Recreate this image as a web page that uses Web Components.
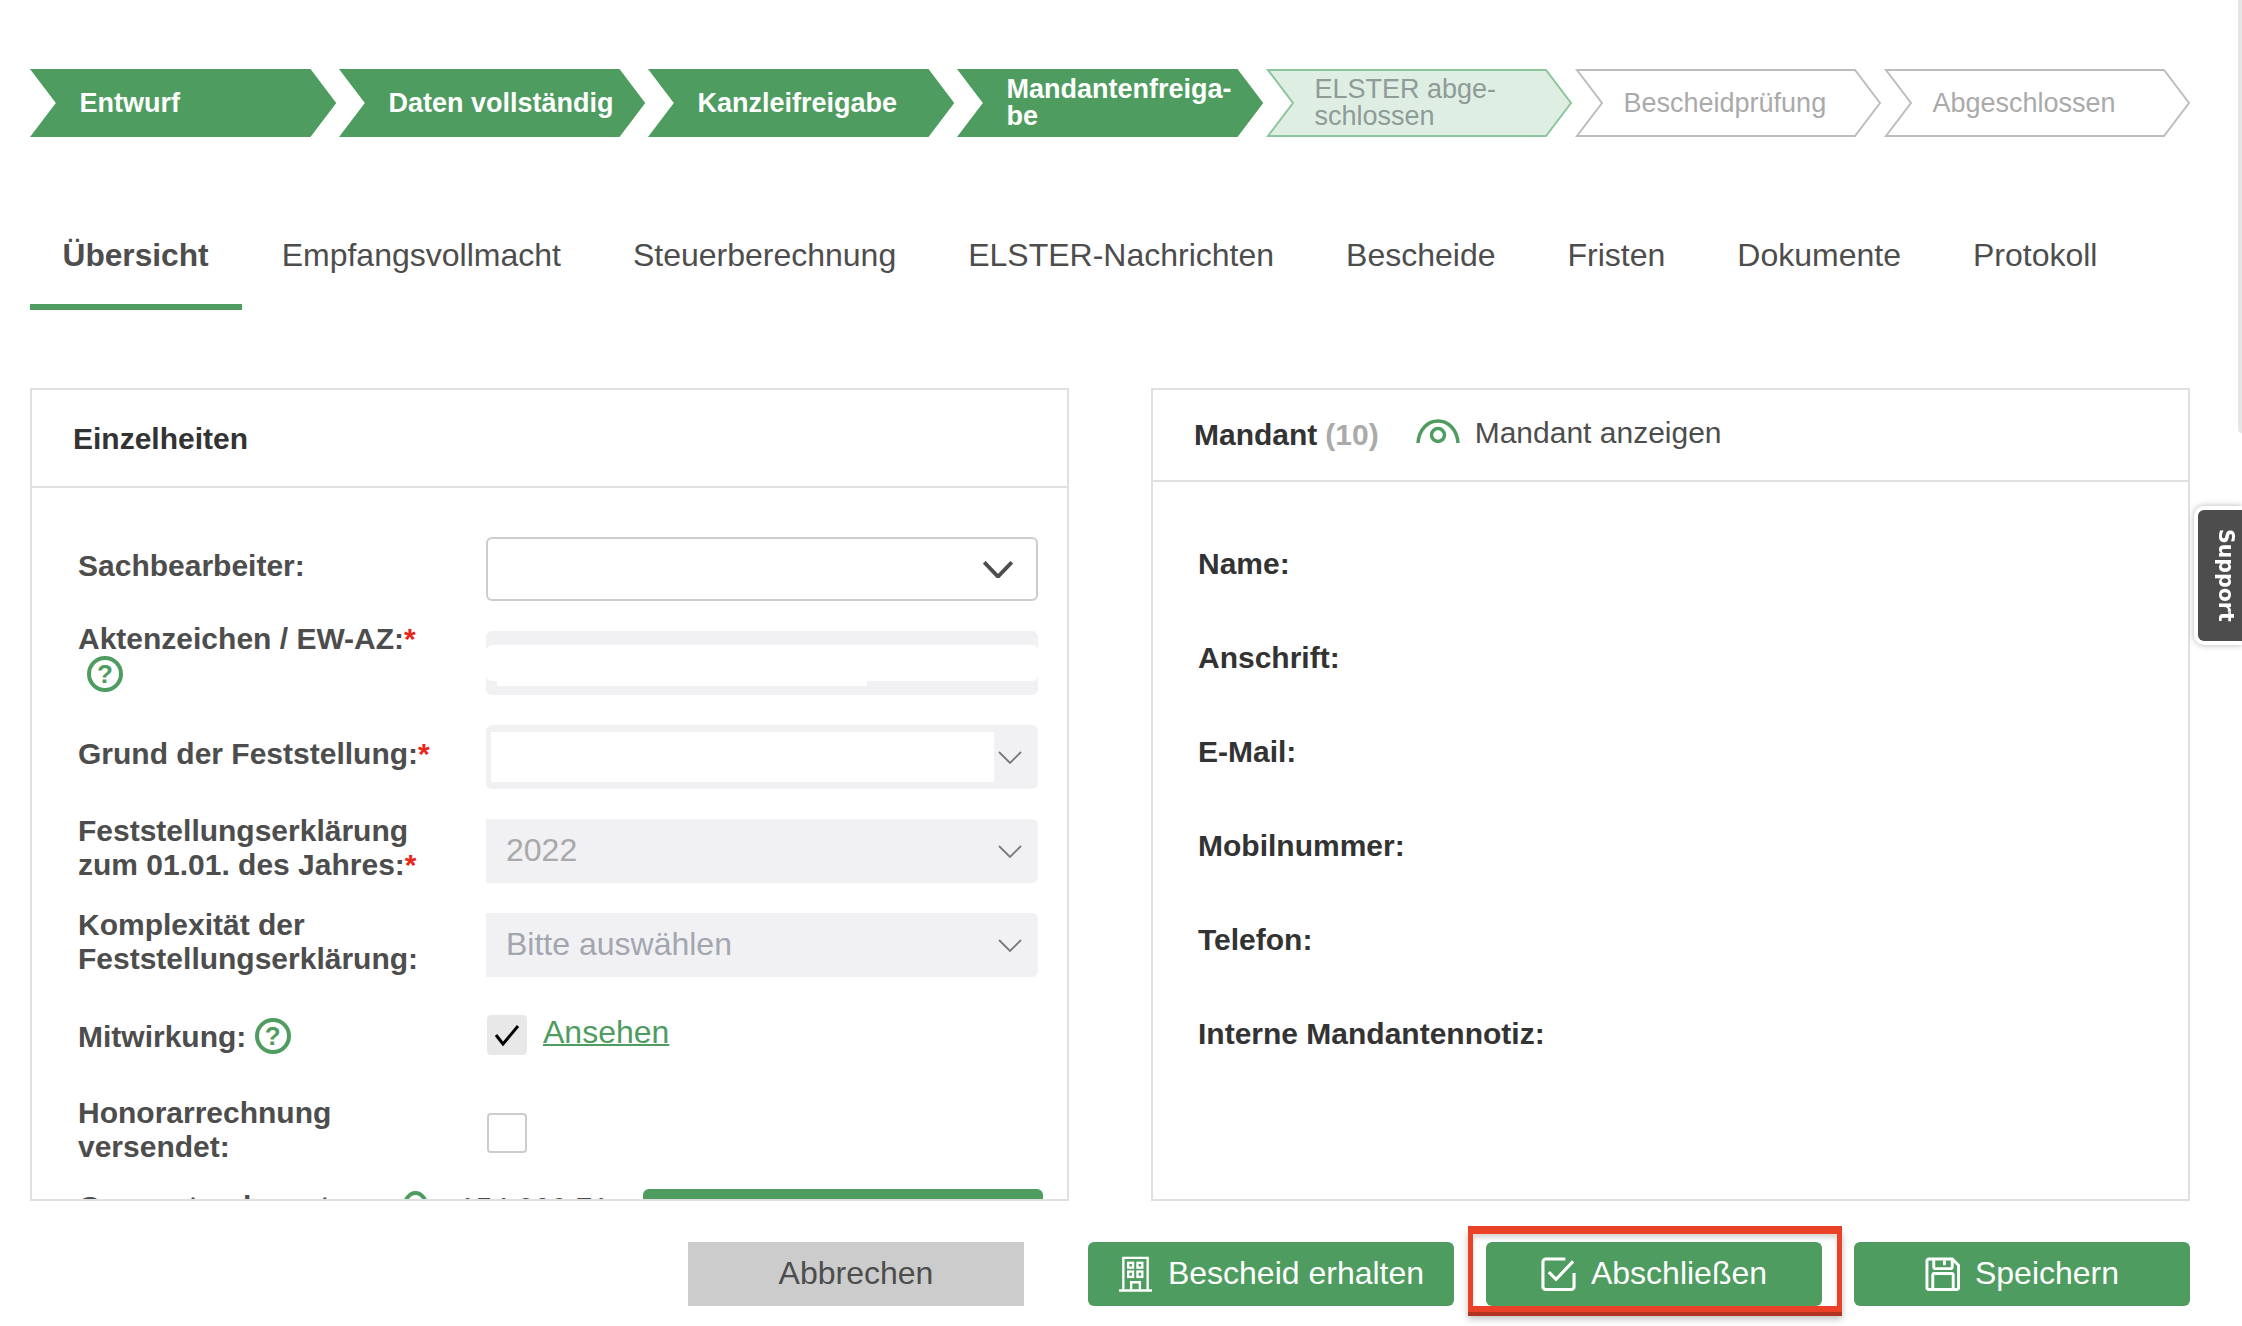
<!DOCTYPE html>
<html lang="de">
<head>
<meta charset="utf-8">
<title>Übersicht</title>
<style>
  html, body { margin: 0; height: 100%; overflow: hidden; background: #fff; }
  body { font-family: "Liberation Sans", Arial, sans-serif; color: #4d4d4d; }
</style>
</head>
<body>
<fc-page>
  <fc-stepper>
    <fc-step state="done">Entwurf</fc-step>
    <fc-step state="done">Daten vollständig</fc-step>
    <fc-step state="done">Kanzleifreigabe</fc-step>
    <fc-step state="done">Mandantenfreiga-<br>be</fc-step>
    <fc-step state="current">ELSTER abge-<br>schlossen</fc-step>
    <fc-step>Bescheidprüfung</fc-step>
    <fc-step>Abgeschlossen</fc-step>
  </fc-stepper>

  <fc-tabs>
    <fc-tab active>Übersicht</fc-tab>
    <fc-tab>Empfangsvollmacht</fc-tab>
    <fc-tab>Steuerberechnung</fc-tab>
    <fc-tab>ELSTER-Nachrichten</fc-tab>
    <fc-tab>Bescheide</fc-tab>
    <fc-tab>Fristen</fc-tab>
    <fc-tab>Dokumente</fc-tab>
    <fc-tab>Protokoll</fc-tab>
  </fc-tabs>

  <fc-columns>
    <fc-panel style="--head: 98px; --head-pad: 41px; --head-top: 2px; --body-pad: 49px 0 0 46px">
      <span slot="head">Einzelheiten</span>
      <fc-field>Sachbearbeiter:<fc-select slot="control" kind="plain"></fc-select></fc-field>
      <fc-field lift="12">Aktenzeichen / EW-AZ:<fc-star></fc-star><br><fc-help style="margin-left: 9px"></fc-help><fc-input slot="control"></fc-input></fc-field>
      <fc-field>Grund der Feststellung:<fc-star></fc-star><fc-select slot="control" kind="blank"></fc-select></fc-field>
      <fc-field>Feststellungserklärung<br>zum 01.01. des Jahres:<fc-star></fc-star><fc-select slot="control" kind="off">2022</fc-select></fc-field>
      <fc-field>Komplexität der<br>Feststellungserklärung:<fc-select slot="control" kind="off" hint>Bitte auswählen</fc-select></fc-field>
      <fc-field short>Mitwirkung: <fc-help style="margin-top: -7px"></fc-help><fc-check slot="control" checked><fc-link>Ansehen</fc-link></fc-check></fc-field>
      <fc-field tall>Honorarrechnung<br>versendet:<fc-check slot="control"></fc-check></fc-field>
      <fc-amount value="154.000,71">Gegenstandswert:</fc-amount>
    </fc-panel>

    <fc-panel style="--head: 92px; --head-pad: 41px; --body-pad: 65px 0 0 45px">
      <span slot="head"><fc-client-head count="(10)" action="Mandant anzeigen">Mandant</fc-client-head></span>
      <fc-info>Name:</fc-info>
      <fc-info>Anschrift:</fc-info>
      <fc-info>E-Mail:</fc-info>
      <fc-info>Mobilnummer:</fc-info>
      <fc-info>Telefon:</fc-info>
      <fc-info>Interne Mandantennotiz:</fc-info>
    </fc-panel>
  </fc-columns>

  <fc-footer>
    <fc-button kind="cancel">Abbrechen</fc-button>
    <fc-button icon="building" style="width: 366px">Bescheid erhalten</fc-button>
    <fc-button icon="check" marked>Abschließen</fc-button>
    <fc-button icon="save">Speichern</fc-button>
  </fc-footer>
</fc-page>
<fc-support>Support</fc-support>

<script>
class Page extends HTMLElement {
  constructor() {
    super();
    this.attachShadow({ mode: 'open' });
    this.shadowRoot.innerHTML = `
    <style>
      :host {
        display: flex;
        flex-direction: column;
        box-sizing: border-box;
        height: 1326px;
        padding: 69px 52px 0 30px;
      }
      #scrollbar {
        position: fixed;
        top: 0;
        right: 0;
        width: 4px;
        height: 433px;
        background: #e6e6e6;
        border-bottom-left-radius: 4px;
      }
    </style>
    <slot></slot>
    <div id="scrollbar"></div>`;
  }
}

class Stepper extends HTMLElement {
  constructor() {
    super();
    this.attachShadow({ mode: 'open' });
    this.shadowRoot.innerHTML = `
    <style>
      :host { display: flex; gap: 4px; padding-left: 0.5px; }
    </style>
    <slot></slot>`;
  }
}

class Step extends HTMLElement {
  constructor() {
    super();
    this.attachShadow({ mode: 'open' });
    this.shadowRoot.innerHTML = `
    <style>
      :host {
        display: flex;
        align-items: center;
        position: relative;
        box-sizing: border-box;
        width: 305px;
        height: 68px;
        padding-left: 48px;
        font-size: 27px;
        line-height: 27px;
        color: #aaaaaa;
      }
      :host([state="done"]) { color: #fff; font-weight: bold; padding-left: 49px; }
      :host([state="current"]) { color: #8f9b98; }
      svg { position: absolute; inset: 0; width: 100%; height: 100%; overflow: visible; }
      polygon { fill: #fff; stroke: #bdbdbd; stroke-width: 2; }
      :host([state="done"]) polygon { fill: #4e9c5f; stroke: #4e9c5f; }
      :host([state="current"]) polygon { fill: #deeee3; stroke: #8dc59d; }
      span { position: relative; }
    </style>
    <svg viewBox="0 0 305 68"><polygon points="1,1 279,1 304,34 279,67 1,67 26,34"/></svg>
    <span><slot></slot></span>`;
  }
}

class Tabs extends HTMLElement {
  constructor() {
    super();
    this.attachShadow({ mode: 'open' });
    this.shadowRoot.innerHTML = `
    <style>
      :host { display: flex; gap: 7px; margin-top: 63px; }
    </style>
    <slot></slot>`;
  }
}

class Tab extends HTMLElement {
  constructor() {
    super();
    this.attachShadow({ mode: 'open' });
    this.shadowRoot.innerHTML = `
    <style>
      :host {
        display: block;
        box-sizing: border-box;
        height: 110px;
        padding: 32px 32.5px 0;
        font-size: 32px;
        line-height: 46px;
        color: #4d4d4d;
        border-bottom: 6px solid transparent;
      }
      :host([active]) {
        padding-right: 33.5px;
        font-size: 31.7px;
        font-weight: bold;
        border-bottom-color: #4e9c5f;
      }
    </style>
    <slot></slot>`;
  }
}

class Columns extends HTMLElement {
  constructor() {
    super();
    this.attachShadow({ mode: 'open' });
    this.shadowRoot.innerHTML = `
    <style>
      :host {
        display: grid;
        grid-template-columns: 1039px 1039px;
        gap: 82px;
        margin-top: 78px;
      }
    </style>
    <slot></slot>`;
  }
}

class Panel extends HTMLElement {
  constructor() {
    super();
    this.attachShadow({ mode: 'open' });
    this.shadowRoot.innerHTML = `
    <style>
      :host {
        display: flex;
        flex-direction: column;
        box-sizing: border-box;
        height: 813px;
        border: 2px solid #e0e0e0;
        overflow: hidden;
      }
      #head {
        flex: none;
        display: flex;
        align-items: center;
        box-sizing: border-box;
        height: var(--head);
        padding-top: var(--head-top, 0);
        padding-left: var(--head-pad);
        border-bottom: 2px solid #e0e0e0;
        font-size: 30px;
        font-weight: bold;
        color: #333;
      }
      #body { padding: var(--body-pad); }
    </style>
    <div id="head"><slot name="head"></slot></div>
    <div id="body"><slot></slot></div>`;
  }
}

class ClientHead extends HTMLElement {
  constructor() {
    super();
    this.attachShadow({ mode: 'open' });
    this.shadowRoot.innerHTML = `
    <style>
      :host { display: flex; align-items: center; }
      #count { color: #aaaaaa; margin-left: 8px; }
      svg { width: 44px; height: 26px; margin: -6px 0 0 37px; fill: none; stroke: #4e9c5f; }
      #action { margin: -4px 0 0 15px; font-weight: normal; color: #4d4d4d; }
    </style>
    <slot></slot>
    <span id="count"></span>
    <svg viewBox="0 0 44 26">
      <path d="M2 24C3 10 12 2 22 2s19 8 20 22" stroke-width="3.5"/>
      <circle cx="22" cy="16" r="6.5" stroke-width="3.5"/>
    </svg>
    <span id="action"></span>`;
  }

  connectedCallback() {
    this.shadowRoot.querySelector('#count').textContent = this.getAttribute('count');
    this.shadowRoot.querySelector('#action').textContent = this.getAttribute('action');
  }
}

class Field extends HTMLElement {
  constructor() {
    super();
    this.attachShadow({ mode: 'open' });
    this.shadowRoot.innerHTML = `
    <style>
      :host {
        display: grid;
        grid-template-columns: 408px 552px;
        grid-template-rows: minmax(0, 1fr);
        align-items: center;
        height: 64px;
        margin-bottom: 30px;
        font-size: 30px;
        font-weight: bold;
        line-height: 34px;
        color: #4d4d4d;
      }
      :host([short]) { height: 56px; }
      :host([tall]) { height: 80px; margin-bottom: 16px; }
      #label { margin-bottom: var(--lift, 6px); }
      :host([short]) #label { margin: 4px 0 0; }
      ::slotted([slot="control"]) { font-weight: normal; }
    </style>
    <div id="label"><slot></slot></div>
    <slot name="control"></slot>`;
  }

  connectedCallback() {
    if (this.hasAttribute('lift')) {
      this.style.setProperty('--lift', this.getAttribute('lift') + 'px');
    }
  }
}

class Star extends HTMLElement {
  constructor() {
    super();
    this.attachShadow({ mode: 'open' });
    this.shadowRoot.innerHTML = `<style>:host { display: inline; color: #e8261c; }</style>*`;
  }
}

class Help extends HTMLElement {
  constructor() {
    super();
    this.attachShadow({ mode: 'open' });
    this.shadowRoot.innerHTML = `<style>
      :host {
        display: inline-flex;
        align-items: center;
        justify-content: center;
        box-sizing: border-box;
        width: 36px;
        height: 36px;
        margin-top: -4px;
        border: 4px solid #4e9c5f;
        border-radius: 50%;
        font-size: 26px;
        font-weight: bold;
        line-height: 1;
        color: #4e9c5f;
        vertical-align: middle;
      }
    </style>?`;
  }
}

class Select extends HTMLElement {
  constructor() {
    super();
    this.attachShadow({ mode: 'open' });
    this.shadowRoot.innerHTML = `
    <style>
      :host {
        display: flex;
        align-items: center;
        position: relative;
        box-sizing: border-box;
        width: 100%;
        height: 64px;
        padding: 0 0 2px 20px;
        border-radius: 0 6px 6px 0;
        background: #f1f0f3;
        font-size: 32px;
        color: #a9a9a9;
      }
      :host([hint]) { color: #a3a6b0; }
      :host([kind="plain"]) {
        background: #fff;
        border: 2px solid #cccccc;
        border-radius: 6px;
      }
      :host([kind="blank"]) { border-radius: 6px; }
      #blank { display: none; position: absolute; top: 7px; bottom: 7px; left: 5px; width: 503px; background: #fff; }
      :host([kind="blank"]) #blank { display: block; }
      svg {
        position: absolute;
        top: 26px;
        right: 16px;
        width: 24px;
        height: 13px;
        fill: none;
        stroke: #7a7a7a;
        stroke-width: 1.8;
      }
      :host([kind="plain"]) svg {
        top: 22px;
        right: 23px;
        width: 30px;
        height: 17px;
        stroke: #4d4d4d;
        stroke-width: 3;
      }
    </style>
    <div id="blank"></div>
    <slot></slot>
    <svg viewBox="0 0 24 13" preserveAspectRatio="none"><polyline points="1,1 12,12 23,1"/></svg>`;
  }
}

class Input extends HTMLElement {
  constructor() {
    super();
    this.attachShadow({ mode: 'open' });
    this.shadowRoot.innerHTML = `
    <style>
      :host {
        display: block;
        position: relative;
        width: 100%;
        height: 64px;
        border-radius: 6px;
        background: #f1f0f3;
      }
      #fill { position: absolute; top: 14px; left: 0; right: 0; height: 36px; background: #fff; border-radius: 6px; }
      #patch { position: absolute; top: 44px; left: 11px; width: 370px; height: 11px; background: #fff; }
    </style>
    <div id="fill"></div>
    <div id="patch"></div>`;
  }
}

class Check extends HTMLElement {
  constructor() {
    super();
    this.attachShadow({ mode: 'open' });
    this.shadowRoot.innerHTML = `
    <style>
      :host { display: flex; align-items: center; gap: 16px; padding-left: 1px; }
      #box {
        display: flex;
        align-items: center;
        justify-content: center;
        box-sizing: border-box;
        width: 40px;
        height: 40px;
        border: 2px solid #cccccc;
        border-radius: 4px;
        background: #fff;
      }
      :host([checked]) #box { background: #e8e8e8; border-color: #e8e8e8; }
      svg { display: none; width: 26px; height: 22px; fill: none; stroke: #000; stroke-width: 3; }
      :host([checked]) svg { display: block; }
    </style>
    <div id="box"><svg viewBox="0 0 26 22"><polyline points="2,11 9,20 24,2"/></svg></div>
    <slot></slot>`;
  }
}

class Link extends HTMLElement {
  constructor() {
    super();
    this.attachShadow({ mode: 'open' });
    this.shadowRoot.innerHTML = `
    <style>
      :host {
        display: inline-block;
        margin-top: -6px;
        font-size: 32px;
        color: #4e9c5f;
        text-decoration: underline;
        text-decoration-thickness: 2px;
      }
    </style>
    <slot></slot>`;
  }
}

class Amount extends HTMLElement {
  constructor() {
    super();
    this.attachShadow({ mode: 'open' });
    this.shadowRoot.innerHTML = `
    <style>
      :host {
        display: flex;
        align-items: flex-start;
        width: 966px;
        font-size: 30px;
        font-weight: bold;
        line-height: 34px;
        color: #4d4d4d;
      }
      #label { width: 324px; margin-top: 1px; white-space: nowrap; }
      #value { width: 151px; margin: 2px 33px 0 30px; font-weight: normal; white-space: nowrap; }
      #go { width: 400px; height: 64px; border-radius: 6px; background: #4e9c5f; }
      fc-help { flex: none; margin-top: 2px; width: 27px; height: 36px; }
    </style>
    <div id="label"><slot></slot></div>
    <fc-help></fc-help>
    <div id="value"></div>
    <div id="go"></div>`;
  }

  connectedCallback() {
    this.shadowRoot.querySelector('#value').textContent = this.getAttribute('value');
  }
}

class Info extends HTMLElement {
  constructor() {
    super();
    this.attachShadow({ mode: 'open' });
    this.shadowRoot.innerHTML = `
    <style>
      :host {
        display: block;
        height: 94px;
        font-size: 30px;
        font-weight: bold;
        line-height: 34px;
        color: #333;
      }
    </style>
    <slot></slot>`;
  }
}

class Footer extends HTMLElement {
  constructor() {
    super();
    this.attachShadow({ mode: 'open' });
    this.shadowRoot.innerHTML = `
    <style>
      :host { display: flex; justify-content: flex-end; gap: 32px; margin-top: 41px; }
    </style>
    <slot></slot>`;
  }
}

const BUTTON_ICONS = {
  building: `<svg viewBox="0 0 34 37" fill="none" stroke="#fff" stroke-width="2.4">
      <path d="M4.5 35.5V2h25v33.5M0 35.5h34M12.5 35.5V27h9v8.5"/>
      <rect x="9.5" y="7" width="5" height="5"/><rect x="19" y="7" width="5" height="5"/>
      <rect x="9.5" y="16" width="5" height="5.5"/><rect x="19" y="16" width="5" height="5.5"/>
    </svg>`,
  check: `<svg viewBox="0 0 36 36" fill="none" stroke="#fff" stroke-width="3.2">
      <path d="M25 2.500H5a3 3 0 0 0-3 3V31a3 3 0 0 0 3 3h26a3 3 0 0 0 3-3V17"/>
      <path d="M8 16l7.500 7.500L33 5"/>
    </svg>`,
  save: `<svg viewBox="0 0 36 36" fill="none" stroke="#fff" stroke-width="3">
      <path d="M4 2.500H28L34.500 9V32a2 2 0 0 1-2 2H4a2 2 0 0 1-2-2V4.500a2 2 0 0 1 2-2Z"/>
      <path d="M9 2.500V11a1.500 1.500 0 0 0 1.500 1.500h16A1.500 1.500 0 0 0 28 11V2.500M20 4v5"/>
      <path d="M8 34V19a1.500 1.500 0 0 1 1.500-1.500h18A1.500 1.500 0 0 1 29 19V34"/>
    </svg>`,
};

class Button extends HTMLElement {
  constructor() {
    super();
    this.attachShadow({ mode: 'open' });
    this.shadowRoot.innerHTML = `
    <style>
      :host {
        display: flex;
        align-items: center;
        justify-content: center;
        gap: 15px;
        position: relative;
        box-sizing: border-box;
        width: 336px;
        height: 64px;
        border-radius: 6px;
        background: #4e9c5f;
        font-size: 32px;
        color: #fff;
      }
      :host([kind="cancel"]) {
        margin-right: 32px;
        border-radius: 0;
        background: #cccccc;
        color: #4d4d4d;
      }
      #icon { display: flex; }
      #icon:empty { display: none; }
      #icon svg { display: block; width: 35px; height: 36px; }
      #text { position: relative; top: -1px; }
      #mark {
        display: none;
        position: absolute;
        top: -16px;
        right: -20px;
        bottom: -6px;
        left: -18px;
        border: 5px solid #ea4128;
        border-top-width: 8px;
        border-bottom-width: 6px;
        box-shadow: 0 4px 0 #b0341f, 0 7px 7px rgba(0,0,0,0.25), inset 0 4px 4px rgba(0,0,0,0.15);
      }
      :host([marked]) #mark { display: block; }
    </style>
    <span id="icon"></span><span id="text"><slot></slot></span>
    <div id="mark"></div>`;
  }

  connectedCallback() {
    const icon = this.getAttribute('icon');
    if (icon) {
      this.shadowRoot.querySelector('#icon').innerHTML = BUTTON_ICONS[icon];
    }
  }
}

class Support extends HTMLElement {
  constructor() {
    super();
    this.attachShadow({ mode: 'open' });
    this.shadowRoot.innerHTML = `
    <style>
      :host {
        display: flex;
        align-items: center;
        justify-content: center;
        position: fixed;
        top: 506px;
        right: 0;
        box-sizing: border-box;
        width: 48px;
        height: 139px;
        padding-left: 12px;
        border: 4px solid #fff;
        border-right: 0;
        border-radius: 10px 0 0 10px;
        background: #4d4d4d;
        box-shadow: 0 0 6px rgba(0,0,0,0.3);
        font-family: "DejaVu Sans", sans-serif;
        font-size: 20.5px;
        font-weight: bold;
        color: #fff;
        writing-mode: vertical-rl;
      }
    </style>
    <slot></slot>`;
  }
}

customElements.define('fc-page', Page);
customElements.define('fc-stepper', Stepper);
customElements.define('fc-step', Step);
customElements.define('fc-tabs', Tabs);
customElements.define('fc-tab', Tab);
customElements.define('fc-columns', Columns);
customElements.define('fc-panel', Panel);
customElements.define('fc-client-head', ClientHead);
customElements.define('fc-field', Field);
customElements.define('fc-star', Star);
customElements.define('fc-help', Help);
customElements.define('fc-select', Select);
customElements.define('fc-input', Input);
customElements.define('fc-check', Check);
customElements.define('fc-link', Link);
customElements.define('fc-amount', Amount);
customElements.define('fc-info', Info);
customElements.define('fc-footer', Footer);
customElements.define('fc-button', Button);
customElements.define('fc-support', Support);
</script>
</body>
</html>
